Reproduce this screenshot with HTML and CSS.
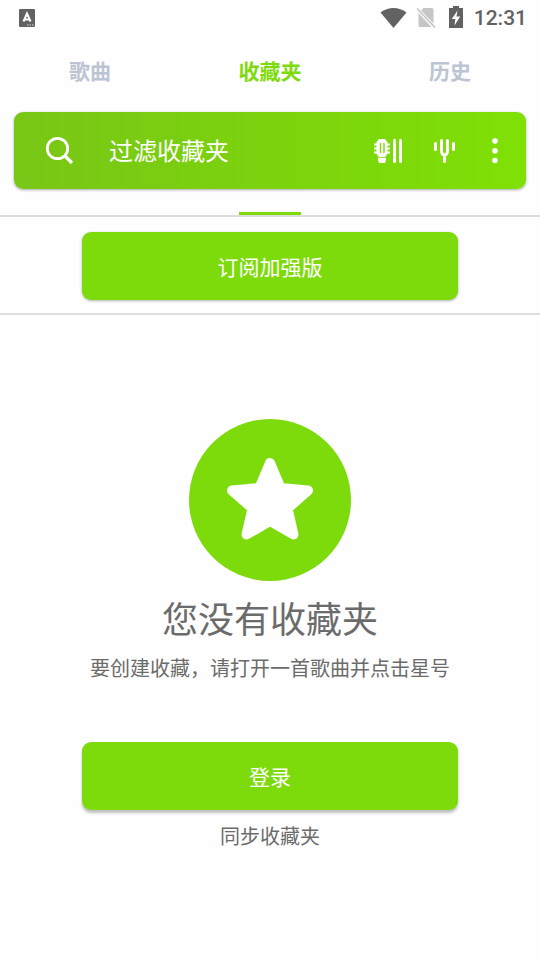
FILE: index.html
```html
<!DOCTYPE html>
<html lang="zh-CN">
<head>
<meta charset="utf-8">
<meta name="viewport" content="width=device-width, initial-scale=1">
<title>收藏夹</title>
<link rel="stylesheet" href="styles.css">
</head>
<body>
<div class="status">
  <svg class="status-app" width="16" height="18" viewBox="0 0 16 18" aria-hidden="true">
    <rect width="16" height="18" rx="1" fill="#626262"/>
    <path d="M4.500 12.500 8 4.500 11.500 12.500M5.500 10.500h5" fill="none" stroke="#fff" stroke-width="2"/>
    <path d="M8 16h1.500M10.500 16h1.500M13 16h1.500" stroke="#ddd" stroke-width="1"/>
  </svg>
  <div class="status-right">
    <svg width="27" height="22" viewBox="0 0 27 22" aria-hidden="true"><path d="M.5 5.500C8-.6 19-.6 26.500 5.500L13.500 21Z" fill="#626262"/></svg>
    <svg width="20" height="22" viewBox="0 0 20 22" aria-hidden="true"><path d="M7.500 1H16q1.500 0 1.500 1.500V16.500L5 3.500ZM2.500 6 15.500 20H4q-1.500 0-1.500-1.500Z" fill="#c6c6c6"/><path d="M1 1.500 19 20.500" stroke="#c6c6c6" stroke-width="1.800"/></svg>
    <svg class="battery" width="14" height="22" viewBox="0 0 14 22" aria-hidden="true"><path d="M4 0h6v2h4v20H0V2h4Z" fill="#626262"/><path d="M8.500 4.500 2.800 13H6.300L5.500 19.500 11.200 10.500H7.500Z" fill="#fff"/></svg>
    <span class="clock">12:31</span>
  </div>
</div>
<nav class="tabs">
  <a class="tab" href="#songs">歌曲</a>
  <a class="tab tab-active" href="#favorites" aria-current="page">收藏夹</a>
  <a class="tab" href="#history">历史</a>
</nav>
<form class="search" role="search">
  <label class="search-label" for="filter" aria-label="过滤收藏夹">
    <svg width="30" height="30" viewBox="0 0 30 30" aria-hidden="true"><circle cx="12.500" cy="12.500" r="10.200" fill="none" stroke="#fff" stroke-width="2.800"/><path d="M20 20 27 27" stroke="#fff" stroke-width="3.200"/></svg>
  </label>
  <input class="search-input" id="filter" type="text" placeholder="过滤收藏夹">
  <button class="tool tool-guitar" type="button" aria-label="和弦">
    <svg width="30" height="26" viewBox="0 0 30 26" aria-hidden="true" fill="#fff">
      <path fill-rule="evenodd" d="M6 1H12L14.500 4V16L12 19H6L3.500 16V4ZM6.800 5.500V14.500L8.200 15.500V4.500ZM10.300 4.500V15.500L11.700 14.500V5.500Z"/>
      <path d="M1 6.500H5M1 10.500H5M1 14.500H5M14 6.500H17M14 10.500H17M14 14.500H17" stroke="#fff" stroke-width="2.200"/>
      <path d="M5 19.800H13V22L12 25H6L5 22Z"/>
      <path d="M21.500 5V23.500M27.500 5V23.500" stroke="#fff" stroke-width="3" stroke-linecap="round"/>
      <path d="M21.500 2V5M27.500 2V5" stroke="#fff" stroke-width="2.400" stroke-linecap="round"/>
    </svg>
  </button>
  <button class="tool tool-tuner" type="button" aria-label="调音器">
    <svg width="24" height="26" viewBox="0 0 24 26" aria-hidden="true" fill="none" stroke="#fff" stroke-width="3" stroke-linecap="round" stroke-linejoin="round"><path d="M8.500 2.500V13Q8.500 16.500 11.500 17.500 14.500 16.500 14.500 13V2.500M11.500 17.500V23.500M2.500 5.500V11.500M20.500 5.500V11.500"/></svg>
  </button>
  <button class="tool tool-more" type="button" aria-label="更多">
    <svg width="8" height="28" viewBox="0 0 8 28" aria-hidden="true" fill="#fff"><circle cx="4" cy="4" r="2.800"/><circle cx="4" cy="13.700" r="2.800"/><circle cx="4" cy="23.500" r="2.800"/></svg>
  </button>
</form>
<div class="indicator"></div>
<section class="promo">
  <button class="action" type="button">订阅加强版</button>
</section>
<main class="empty">
  <svg class="star" width="162" height="162" viewBox="0 0 162 162" aria-hidden="true">
    <circle cx="81" cy="81" r="81" fill="#7edb0b"/>
    <path d="M81 44 91.500 69 119 71.500 98.500 89.500 104.500 115.500 81 102 57.500 115.500 63.500 89.500 43 71.500 70.500 69Z" fill="#fff" stroke="#fff" stroke-width="10" stroke-linejoin="round"/>
  </svg>
  <h1 class="title">您没有收藏夹</h1>
  <p class="hint">要创建收藏，请打开一首歌曲并点击星号</p>
  <button class="action action-login" type="button">登录</button>
  <p class="sync">同步收藏夹</p>
</main>
</body>
</html>
```

FILE: styles.css
```css
* {
  box-sizing: border-box;
}

body {
  margin: 0;
  background: #fefefe;
  color: #6b6b6b;
  font-family: "Noto Sans CJK SC", sans-serif;
}

button,
input {
  border: 0;
  padding: 0;
  font-family: inherit;
}

svg {
  display: block;
}

.status {
  display: flex;
  align-items: center;
  justify-content: space-between;
  height: 36px;
  padding: 0 13px 0 19px;
}

.status-right {
  display: flex;
  align-items: center;
  gap: 9px;
}

.battery {
  margin: 0 2px 2px 4px;
}

.clock {
  font: 500 21px/38px Roboto, sans-serif;
  color: #626262;
}

.tabs {
  display: grid;
  grid-template-columns: repeat(3, 1fr);
  height: 76px;
}

.tab {
  color: #bcc4d3;
  font-size: 21px;
  font-weight: 700;
  line-height: 68px;
  text-align: center;
  text-decoration: none;
}

.tab-active {
  color: #7edb0b;
}

.search {
  display: flex;
  align-items: center;
  height: 77px;
  margin: 0 14px;
  padding: 0 27px 0 31px;
  border-radius: 9px;
  background: linear-gradient(90deg, #78c616, #7fe005);
  box-shadow: 0 1px 3px rgba(0, 0, 0, 0.35);
}

.search-input {
  flex: 1;
  min-width: 0;
  margin-left: 34px;
  padding-bottom: 2px;
  background: none;
  color: #fff;
  font-size: 24px;
  outline: 0;
}

.search-input::placeholder {
  color: #fff;
  opacity: 1;
}

.tool {
  background: none;
}

.tool-tuner {
  margin-left: 30px;
}

.tool-more {
  margin-left: 34px;
}

.indicator {
  width: 62px;
  height: 3px;
  margin: 23px auto 0;
  background: #7edb0b;
}

.promo {
  padding: 15px 82px 13px;
  border-top: 2px solid #dedede;
  border-bottom: 2px solid #dedede;
}

.action {
  display: block;
  width: 100%;
  height: 68px;
  padding-bottom: 1px;
  border-radius: 9px;
  background: #7edb0b;
  box-shadow: 0 1px 3px rgba(0, 0, 0, 0.3);
  color: #fff;
  font-size: 21px;
}

.empty {
  padding: 104px 82px 40px;
  text-align: center;
}

.star {
  margin: 0 auto;
}

.title {
  margin: 8px 0 0;
  font-size: 36px;
  font-weight: 400;
  line-height: 56px;
}

.hint,
.sync {
  margin: 0;
  font-size: 20px;
  line-height: 40px;
}

.hint {
  padding-top: 3px;
}

.action-login {
  margin: 54px 0 6px;
  box-shadow: 0 3px 3px rgba(0, 0, 0, 0.25);
}
```
